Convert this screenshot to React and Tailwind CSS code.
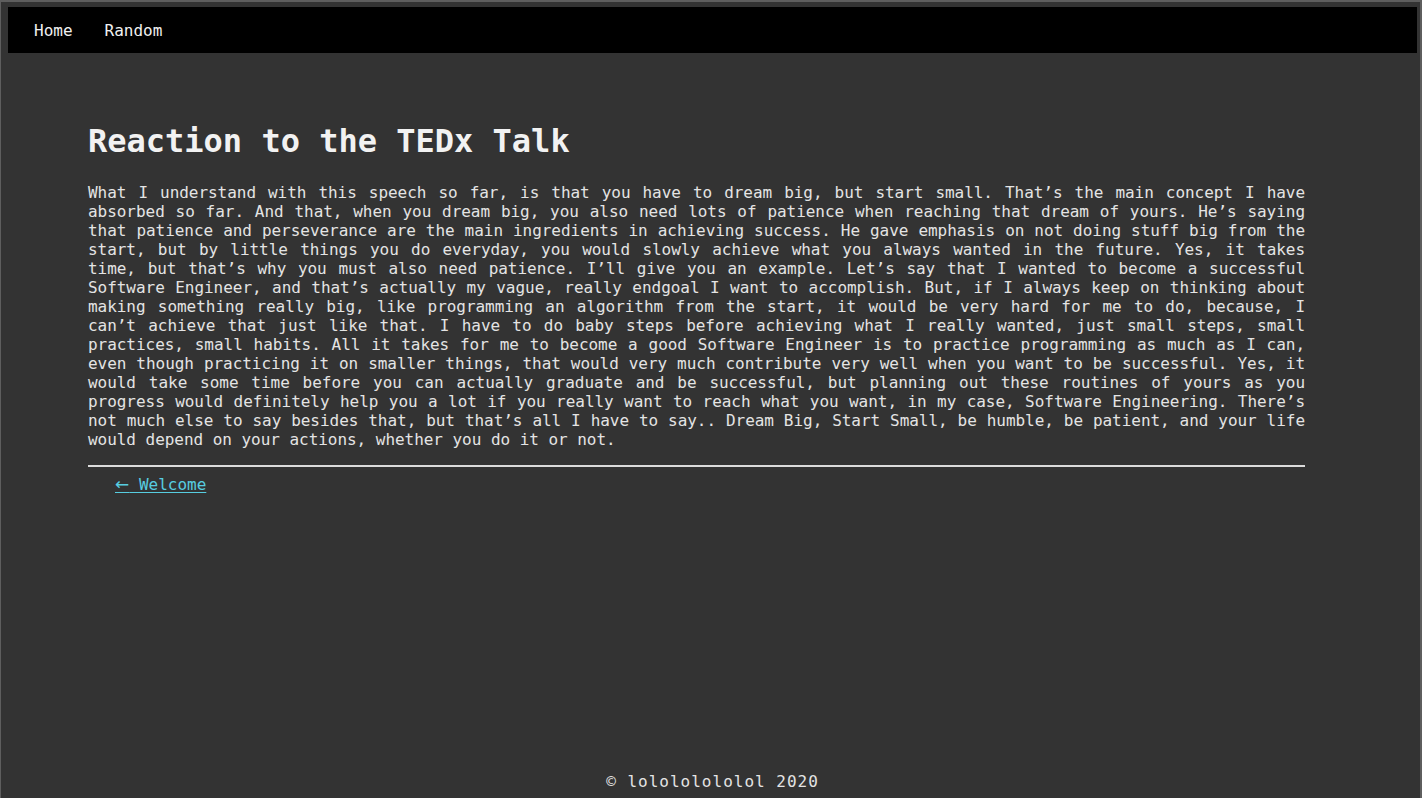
const body =
  "What I understand with this speech so far, is that you have to dream big, but start small. That’s the main concept I have absorbed so far. And that, when you dream big, you also need lots of patience when reaching that dream of yours. He’s saying that patience and perseverance are the main ingredients in achieving success. He gave emphasis on not doing stuff big from the start, but by little things you do everyday, you would slowly achieve what you always wanted in the future. Yes, it takes time, but that’s why you must also need patience. I’ll give you an example. Let’s say that I wanted to become a successful Software Engineer, and that’s actually my vague, really endgoal I want to accomplish. But, if I always keep on thinking about making something really big, like programming an algorithm from the start, it would be very hard for me to do, because, I can’t achieve that just like that. I have to do baby steps before achieving what I really wanted, just small steps, small practices, small habits. All it takes for me to become a good Software Engineer is to practice programming as much as I can, even though practicing it on smaller things, that would very much contribute very well when you want to be successful. Yes, it would take some time before you can actually graduate and be successful, but planning out these routines of yours as you progress would definitely help you a lot if you really want to reach what you want, in my case, Software Engineering. There’s not much else to say besides that, but that’s all I have to say.. Dream Big, Start Small, be humble, be patient, and your life would depend on your actions, whether you do it or not.";

export default function App() {
  return (
    <div className="min-h-screen h-[798px] flex flex-col bg-[#333333] border-l border-t-2 border-r-2 border-[#5e5e5e] pt-[5px] pl-[7px] pr-[3px] font-['DejaVu_Sans_Mono',monospace] text-[#e4e4e4]">
      {/* Barre de navigation */}
      <nav className="h-[46px] bg-black flex items-center pt-[2px] pl-[10px] text-[16px] text-[#f0f0f0]">
        <a className="px-4">Home</a>
        <a className="px-4">Random</a>
      </nav>

      {/* Article */}
      <main className="ml-[80px] w-[1217px] mt-[70px]">
        <h1 className="text-[32px] leading-[37px] font-bold text-[#f2f2f2] mb-[23px]">
          Reaction to the TEDx Talk
        </h1>
        <p className="text-[16px] leading-[19px] text-justify tracking-[-0.04px]">{body}</p>
        <hr className="mt-[16px] border-0 h-[2px] bg-[#dcdcdc]" />
        <div className="mt-[8px] pl-[27px] text-[16px] leading-[19px]">
          <a className="text-[#57cde0] underline underline-offset-2">
            <span className="font-['DejaVu_Sans',sans-serif] text-[17px]">←</span> Welcome
          </a>
        </div>
      </main>

      {/* Pied de page */}
      <footer className="mt-auto pb-[7px] text-center text-[16px] leading-[19px] tracking-[1px]">
        © lolololololol 2020
      </footer>
    </div>
  );
}
